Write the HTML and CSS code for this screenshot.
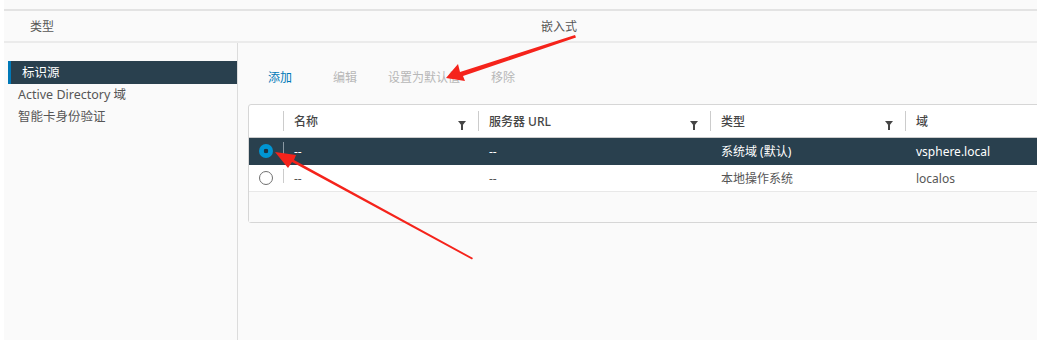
FILE: index.html
```html
<!DOCTYPE html>
<html lang="zh">
<head>
<meta charset="utf-8">
<link rel="stylesheet" href="styles.css">
</head>
<body>
<div class="page">
  <div class="prop-row">
    <span class="prop-label">类型</span>
    <span class="prop-value">嵌入式</span>
  </div>
  <div class="main">
    <nav class="sidebar">
      <div class="nav-item active">标识源</div>
      <div class="nav-item">Active Directory 域</div>
      <div class="nav-item">智能卡身份验证</div>
    </nav>
    <section class="content">
      <div class="toolbar">
        <span class="btn primary">添加</span>
        <span class="btn disabled">编辑</span>
        <span class="btn disabled">设置为默认值</span>
        <span class="btn disabled">移除</span>
      </div>
      <div class="grid">
        <div class="row head">
          <div class="cell c-sel"></div>
          <div class="cell c-name"><span>名称</span><i class="filter"></i></div>
          <div class="cell c-url"><span>服务器 URL</span><i class="filter"></i></div>
          <div class="cell c-type"><span>类型</span><i class="filter"></i></div>
          <div class="cell c-dom"><span>域</span></div>
        </div>
        <div class="row body selected">
          <div class="cell c-sel"><span class="radio on"></span></div>
          <div class="cell c-name">--</div>
          <div class="cell c-url">--</div>
          <div class="cell c-type">系统域 (默认)</div>
          <div class="cell c-dom">vsphere.local</div>
        </div>
        <div class="row body">
          <div class="cell c-sel"><span class="radio"></span></div>
          <div class="cell c-name">--</div>
          <div class="cell c-url">--</div>
          <div class="cell c-type">本地操作系统</div>
          <div class="cell c-dom">localos</div>
        </div>
        <div class="grid-foot"></div>
      </div>
    </section>
  </div>
</div>
<svg class="arrows" width="1045" height="342" viewBox="0 0 1045 342">
  <polygon fill="#f5231b" points="575,35 576,37.5 463,76 465,81 446,78 458,64 460,72" />
  <polygon fill="#f5231b" points="473,258 472,259.5 292,162 288,168 275,152 296,155 294,160" />
</svg>
</body>
</html>
```

FILE: styles.css
```css
html, body {
  margin: 0;
  padding: 0;
  background: #ffffff;
}
body {
  width: 1045px;
  height: 342px;
  overflow: hidden;
  position: relative;
  font-family: "Noto Sans", "Noto Sans CJK SC", sans-serif;
  font-size: 12px;
  color: #565656;
}
.page {
  margin-left: 4px;
  width: 1033px;
  height: 340px;
  background: #fafafa;
  padding-top: 9px;
  box-sizing: border-box;
  overflow: hidden;
}
.prop-row {
  display: flex;
  align-items: center;
  height: 34px;
  box-sizing: border-box;
  border-top: 2px solid #e3e3e3;
  border-bottom: 2px solid #ebebeb;
}
.prop-label {
  margin-left: 26px;
  width: 511px;
}
.prop-value {
  color: #565656;
}
.main {
  display: flex;
  height: 297px;
}
.sidebar {
  width: 229px;
  margin-left: 4px;
  padding-top: 18px;
  border-right: 1px solid #dcdcdc;
  flex-shrink: 0;
}
.nav-item {
  height: 22px;
  line-height: 22px;
  padding-left: 10px;
  color: #565656;
  font-size: 12.5px;
}
.nav-item.active {
  height: 23px;
  line-height: 23px;
  background: #29404e;
  color: #ffffff;
  border-left: 3px solid #0079b8;
  padding-left: 11px;
}
.content {
  padding-left: 10px;
  flex: 1;
  min-width: 0;
}
.toolbar {
  display: flex;
  height: 61px;
  align-items: center;
  padding-top: 7px;
  padding-left: 20px;
  gap: 31px;
  box-sizing: border-box;
}
.btn {
  font-size: 12px;
}
.btn.primary { color: #0079b8; margin-right: 10px; }
.btn.disabled { color: #b7b7b7; }
.grid {
  width: 820px;
  border: 1px solid #d6d6d6;
  border-radius: 3px;
  background: #ffffff;
}
.row {
  display: flex;
  align-items: center;
}
.row.head {
  height: 32px;
  border-bottom: 1px solid #cccccc;
  color: #454545;
  font-weight: 500;
}
.row.body {
  height: 26px;
  border-bottom: 1px solid #e8e8e8;
}
.row.body:last-of-type {
  border-bottom: 2px solid #cccccc;
}
.row.selected {
  background: #29404e;
  color: #ffffff;
  border-bottom-color: #29404e;
}
.cell {
  box-sizing: border-box;
  height: 100%;
  display: flex;
  align-items: center;
  padding-left: 11px;
  position: relative;
}
.head .cell + .cell::before,
.body .c-name::before {
  content: "";
  position: absolute;
  left: 0;
  top: 6px;
  bottom: 6px;
  border-left: 1px solid #cccccc;
}
.body .c-name::before {
  top: 4px;
  bottom: 8px;
}
.selected .c-name::before { border-left-color: #8a99a3; }
.c-sel { width: 34px; padding-left: 10px; }
.c-name { width: 195px; }
.c-url { width: 232px; }
.c-type { width: 195px; }
.c-dom { width: 164px; }
.head .cell span { flex: 1; }
.filter {
  width: 0;
  height: 0;
  margin-right: 12px;
  margin-top: 4px;
  border-left: 4px solid transparent;
  border-right: 4px solid transparent;
  border-top: 5px solid #454545;
  position: relative;
}
.filter::after {
  content: "";
  position: absolute;
  left: -1px;
  top: -1px;
  width: 2px;
  height: 5px;
  background: #454545;
}
.radio {
  width: 12px;
  height: 12px;
  border: 1px solid #707070;
  border-radius: 50%;
  background: #ffffff;
  display: block;
}
.radio.on {
  width: 14px;
  height: 14px;
  border: none;
  background: radial-gradient(circle, #1d3342 0 2px, #0095d3 2.6px);
}
.grid-foot {
  height: 30px;
  background: #fafafa;
}
.arrows {
  position: absolute;
  left: 0;
  top: 0;
  pointer-events: none;
}
```
